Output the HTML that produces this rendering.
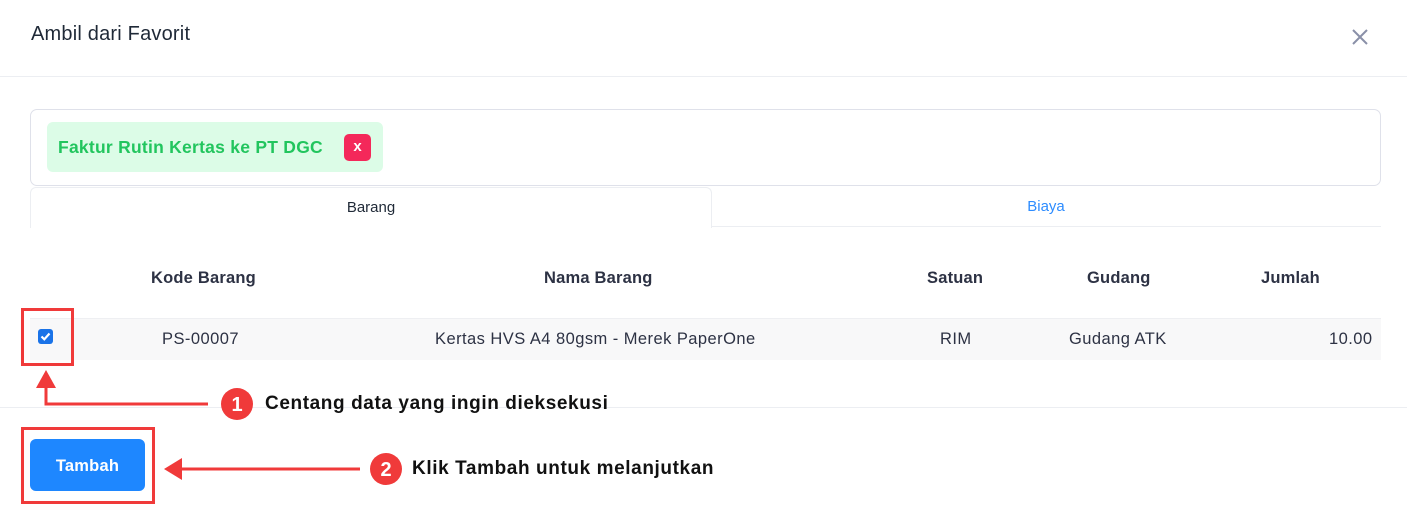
<!DOCTYPE html>
<html><head><style>
*{margin:0;padding:0;box-sizing:border-box}
body{width:1407px;height:510px;background:#fff;font-family:"Liberation Sans",sans-serif;position:relative;overflow:hidden;color:#1f2937}
.a{position:absolute}
</style></head><body>
<div class="a" style="left:31px;top:23px;font-size:20px;letter-spacing:0.2px;color:#1f2937">Ambil dari Favorit</div>
<svg class="a" style="left:1350px;top:27px" width="20" height="20"><path d="M3 3L17 17M17 3L3 17" stroke="#8a90a8" stroke-width="2"/></svg>
<div class="a" style="left:0;top:76px;width:1407px;height:1px;background:#eceef2"></div>
<div class="a" style="left:30px;top:109px;width:1351px;height:77px;border:1px solid #dfe1ea;border-radius:7px"></div>
<div class="a" style="left:47px;top:122px;width:336px;height:50px;background:#dcfce7;border-radius:6px"></div>
<div class="a" style="left:58px;top:137px;font-size:17.5px;font-weight:bold;letter-spacing:0.25px;color:#22c55e">Faktur Rutin Kertas ke PT DGC</div>
<div class="a" style="left:344px;top:134px;width:27px;height:27px;background:#f4285a;border-radius:5px;color:#fff;font-weight:bold;font-size:15px;text-align:center;line-height:26px">x</div>
<div class="a" style="left:30px;top:187px;width:682px;height:41px;border:1px solid #eceef2;border-bottom:none;border-radius:6px 6px 0 0;text-align:center;line-height:40px;font-size:15px;color:#1f2937">Barang</div>
<div class="a" style="left:711px;top:187px;width:670px;height:40px;border-bottom:1px solid #eceef2;text-align:center;line-height:40px;font-size:15px;color:#2d8cff">Biaya</div>
<div class="a" style="top:269px;left:0;width:1407px;font-size:16.5px;font-weight:bold;letter-spacing:0.2px;color:#2d3244">
<span class="a" style="left:151px">Kode Barang</span><span class="a" style="left:544px">Nama Barang</span><span class="a" style="left:927px">Satuan</span><span class="a" style="left:1087px">Gudang</span><span class="a" style="left:1261px">Jumlah</span></div>
<div class="a" style="left:30px;top:318px;width:1351px;height:42px;background:#f8f8f9;border-top:1px solid #eeeff2"></div>
<div class="a" style="top:330px;left:0;width:1407px;font-size:16.5px;letter-spacing:0.45px;color:#2d3244">
<span class="a" style="left:162px">PS-00007</span><span class="a" style="left:435px">Kertas HVS A4 80gsm - Merek PaperOne</span><span class="a" style="left:940px">RIM</span><span class="a" style="left:1069px">Gudang ATK</span><span class="a" style="left:1329px">10.00</span></div>
<div class="a" style="left:38px;top:329px;width:15px;height:15px;background:#1a73e8;border-radius:3px"></div>
<svg class="a" style="left:38px;top:329px" width="15" height="15"><path d="M3.5 7.5L6.3 10.3L11.5 4.5" stroke="#fff" stroke-width="2.2" fill="none"/></svg>
<div class="a" style="left:0;top:407px;width:1407px;height:1px;background:#eceef2"></div>
<div class="a" style="left:30px;top:439px;width:115px;height:52px;background:#1e87ff;border-radius:6px;color:#fff;font-weight:bold;font-size:16.5px;letter-spacing:0.2px;text-align:center;line-height:54px">Tambah</div>
<div class="a" style="left:21px;top:308px;width:53px;height:58px;border:3px solid #f03a3a"></div>
<div class="a" style="left:21px;top:427px;width:134px;height:77px;border:3px solid #f03a3a"></div>
<svg class="a" style="left:0;top:0" width="1407" height="510">
<path d="M46 385V404H208" stroke="#f03a3a" stroke-width="3" fill="none"/>
<path d="M36 388L46 370L56 388Z" fill="#f03a3a"/>
<path d="M180 469H360" stroke="#f03a3a" stroke-width="3"/>
<path d="M182 458L164 469L182 480Z" fill="#f03a3a"/>
<circle cx="237" cy="404" r="16" fill="#f03a3a"/><circle cx="386" cy="469" r="16" fill="#f03a3a"/>
<text x="237" y="411" fill="#fff" font-size="20" font-weight="bold" text-anchor="middle" font-family="Liberation Sans">1</text>
<text x="386" y="476" fill="#fff" font-size="20" font-weight="bold" text-anchor="middle" font-family="Liberation Sans">2</text>
</svg>
<div class="a" style="left:265px;top:393px;font-size:19px;font-weight:bold;letter-spacing:0.6px;color:#111">Centang data yang ingin dieksekusi</div>
<div class="a" style="left:412px;top:458px;font-size:19px;font-weight:bold;letter-spacing:0.6px;color:#111">Klik Tambah untuk melanjutkan</div>
</body></html>
